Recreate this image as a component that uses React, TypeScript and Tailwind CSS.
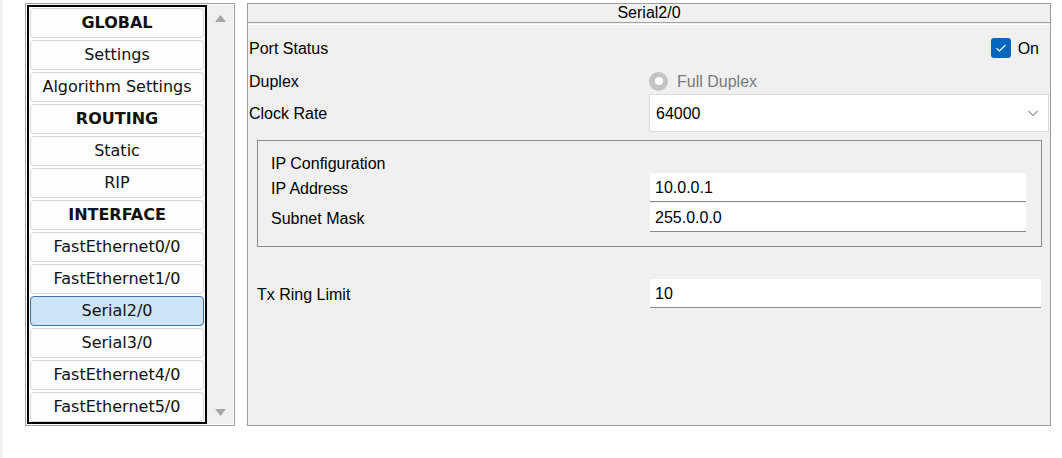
import React from "react";

const items: { label: string; bold?: boolean; selected?: boolean }[] = [
  { label: "GLOBAL", bold: true },
  { label: "Settings" },
  { label: "Algorithm Settings" },
  { label: "ROUTING", bold: true },
  { label: "Static" },
  { label: "RIP" },
  { label: "INTERFACE", bold: true },
  { label: "FastEthernet0/0" },
  { label: "FastEthernet1/0" },
  { label: "Serial2/0", selected: true },
  { label: "Serial3/0" },
  { label: "FastEthernet4/0" },
  { label: "FastEthernet5/0" },
];

function Sidebar() {
  return (
    <div className="mt-[3px] ml-[22px] w-[210px] h-[423px] border border-[#a0a0a0] bg-white flex p-px">
      <div className="w-[180px] h-full border-2 border-black flex flex-col gap-[2px] p-px">
        {items.map((it) => (
          <div
            key={it.label}
            className={
              "h-[30px] shrink-0 rounded-[4px] border flex items-center justify-center text-[16px] leading-none text-[#111] " +
              (it.selected
                ? "bg-[#cce4f7] border-[#3d74a8]"
                : "bg-[#fdfdfd] border-[#d6d6d6]") +
              (it.bold ? " font-bold" : "")
            }
            style={{ fontFamily: '"DejaVu Sans", Verdana, sans-serif' }}
          >
            {it.label}
          </div>
        ))}
      </div>
      <div className="flex-1 bg-[#f0f0f0] flex flex-col items-center justify-between pt-[10px] pb-[8px]">
        <svg width="11" height="7" viewBox="0 0 11 7">
          <polygon points="5.5,0 11,7 0,7" fill="#a6a6a6" />
        </svg>
        <svg width="11" height="7" viewBox="0 0 11 7">
          <polygon points="0,0 11,0 5.5,7" fill="#a6a6a6" />
        </svg>
      </div>
    </div>
  );
}

function TextInput({ value, w }: { value: string; w: string }) {
  return (
    <div className={"h-[29px] bg-white border-b border-[#8a8a8a] flex items-center pl-[5px] pt-[2px] text-[16px] text-black " + w}>
      {value}
    </div>
  );
}

function Config() {
  return (
    <div
      className="mt-[3px] ml-[12px] w-[804px] h-[423px] border border-[#9c9c9c] bg-[#f0f0f0] flex flex-col text-[16px] text-black"
      style={{ fontFamily: '"Liberation Sans", Arial, sans-serif' }}
    >
      <div className="h-[19px] border-b border-[#a0a0a0] flex items-center justify-center leading-none">
        Serial2/0
      </div>
      <div className="h-px bg-white mt-px" />

      {/* Port Status */}
      <div className="mt-[12px] h-[22px] flex items-center pl-px pr-[11px]">
        <div className="flex-1 pt-[2px]">Port Status</div>
        <div className="flex items-center gap-[7px]">
          <div className="w-[20px] h-[20px] rounded-[3px] bg-[#0067c0] flex items-center justify-center">
            <svg width="12" height="10" viewBox="0 0 12 10">
              <path d="M1.5 5.2 L4.5 8 L10.5 2" stroke="white" strokeWidth="1.1" fill="none" />
            </svg>
          </div>
          <span className="pt-[2px]">On</span>
        </div>
      </div>

      {/* Duplex */}
      <div className="mt-[11px] h-[22px] flex items-center pl-px">
        <div className="w-[400px] pt-[2px]">Duplex</div>
        <div className="flex items-center gap-[9px]">
          <div className="w-[19px] h-[19px] rounded-full bg-[#c4c4c4] flex items-center justify-center">
            <div className="w-[8px] h-[8px] rounded-full bg-white" />
          </div>
          <span className="text-[#7a7a7a] pt-[2px]">Full Duplex</span>
        </div>
      </div>

      {/* Clock Rate */}
      <div className="mt-[2px] h-[38px] flex items-center pl-px">
        <div className="w-[400px] pt-[2px]">Clock Rate</div>
        <div className="w-[400px] h-[38px] bg-white border border-[#dcdcdc] flex items-center justify-between pl-[6px] pr-[8px]">
          <span className="pt-[2px]">64000</span>
          <svg width="14" height="14" viewBox="0 0 14 14">
            <path d="M2.5 5 L7 9.5 L11.5 5" stroke="#555" strokeWidth="1" fill="none" />
          </svg>
        </div>
      </div>

      {/* IP Configuration */}
      <div className="mt-[8px] ml-[9px] mr-[8px] h-[107px] border border-[#8c8c8c] pl-[13px] pt-[12px] flex flex-col">
        <div className="h-[20px] flex items-center leading-none pt-[2px]">IP Configuration</div>
        <div className="flex items-center h-[29px]">
          <div className="w-[379px] pt-[2px]">IP Address</div>
          <TextInput value="10.0.0.1" w="w-[376px]" />
        </div>
        <div className="flex items-center h-[29px] mt-px">
          <div className="w-[379px] pt-[2px]">Subnet Mask</div>
          <TextInput value="255.0.0.0" w="w-[376px]" />
        </div>
      </div>

      {/* Tx Ring Limit */}
      <div className="mt-[32px] ml-[9px] flex items-center h-[29px]">
        <div className="w-[393px] pt-[2px]">Tx Ring Limit</div>
        <TextInput value="10" w="w-[391px]" />
      </div>
    </div>
  );
}

export default function App() {
  return (
    <div className="w-[1062px] h-[458px] bg-white flex overflow-hidden">
      <div className="w-[3px] h-full bg-[#f0f0f0]" />
      <div className="flex items-start">
        <Sidebar />
        <Config />
      </div>
    </div>
  );
}
